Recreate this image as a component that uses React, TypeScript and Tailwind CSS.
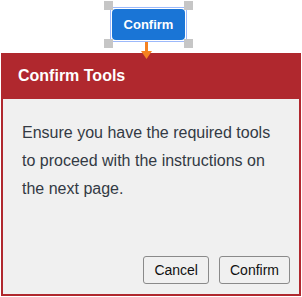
import React from "react";

export default function App() {
  const font = { fontFamily: '"Liberation Sans", Arial, sans-serif' };
  return (
    <div className="w-[302px] h-[297px] bg-white overflow-hidden" style={font}>
      <div className="relative h-[53px] flex pl-[110px] pt-[7px]">
        <div className="relative w-[77px] h-[35px] border border-[#9cb9fb] p-[1px]">
          <button className="w-full h-full rounded-[4px] bg-[#1a75d6] text-white text-[13px] font-bold flex items-center justify-center">
            Confirm
          </button>
          <div className="absolute left-[-7px] top-[-7px] w-[9px] h-[9px] bg-[#c6c6c6]" />
          <div className="absolute right-[-7px] top-[-7px] w-[9px] h-[9px] bg-[#c6c6c6]" />
          <div className="absolute left-[-7px] bottom-[-7px] w-[9px] h-[9px] bg-[#c6c6c6]" />
          <div className="absolute right-[-7px] bottom-[-7px] w-[9px] h-[9px] bg-[#c6c6c6]" />
        </div>
        <div className="absolute left-[145px] top-[42px] w-[3px] h-[11px] bg-[#f58220]" />
        <svg className="absolute left-[141px] top-[51px] z-10" width="11" height="8" viewBox="0 0 11 8">
          <polygon points="0,0 11,0 5.5,8" fill="#f58220" />
        </svg>
      </div>
      <div className="ml-[1px] w-[300px] h-[243px] flex flex-col">
        <div className="h-[46px] bg-[#b0282e] flex items-center px-[17px]">
          <span className="text-white text-[16px] font-bold">Confirm Tools</span>
        </div>
        <div className="flex-1 flex flex-col bg-[#f0f0f0] border-2 border-t-0 border-[#b0282e] pl-[19px] pr-[9px] pt-[20px] pb-[10px]">
          <p className="text-[16px] leading-[28px] text-[#333a44] pr-[10px]">
            Ensure you have the required tools to proceed with the instructions on the next page.
          </p>
          <div className="mt-auto flex justify-end gap-[10px]">
            <button className="h-[28px] px-[10px] border border-[#8a8a8a] rounded-[3px] bg-[#f0f0f0] text-[14px] text-[#111]">
              Cancel
            </button>
            <button className="h-[28px] px-[10px] border border-[#8a8a8a] rounded-[3px] bg-[#f0f0f0] text-[14px] text-[#111]">
              Confirm
            </button>
          </div>
        </div>
      </div>
    </div>
  );
}
